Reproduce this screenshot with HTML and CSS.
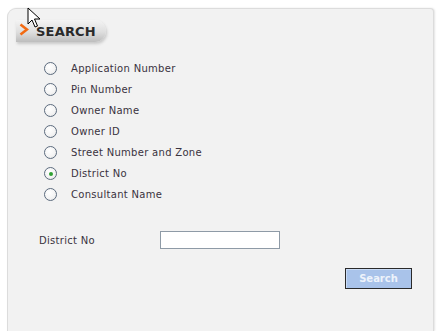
FILE: index.html
```html
<!DOCTYPE html>
<html lang="en">
<head>
    <meta charset="UTF-8">
    <title>Search</title>
    <link rel="stylesheet" href="styles.css">
</head>
<body>
    <div class="panel">
        <div class="tab">
            <svg class="chevron" width="10" height="13" viewBox="0 0 10 13">
                <path d="M1.5 1.5 L8 6.5 L1.5 11.5" fill="none" stroke="#f26a12" stroke-width="2.6" stroke-linejoin="miter"/>
            </svg>
            <span class="tab-title">SEARCH</span>
        </div>

        <div class="options">
            <label class="option"><span class="radio"></span>Application Number</label>
            <label class="option"><span class="radio"></span>Pin Number</label>
            <label class="option"><span class="radio"></span>Owner Name</label>
            <label class="option"><span class="radio"></span>Owner ID</label>
            <label class="option"><span class="radio"></span>Street Number and Zone</label>
            <label class="option"><span class="radio checked"></span>District No</label>
            <label class="option"><span class="radio"></span>Consultant Name</label>
        </div>

        <div class="field">
            <span class="field-label">District No</span>
            <input type="text" class="field-input">
        </div>

        <div class="actions">
            <button class="search-button">Search</button>
        </div>
    </div>

    <!-- mouse pointer -->
    <svg class="cursor" width="14" height="22" viewBox="0 0 14 22">
        <path d="M1 1 L1 17 L5 13 L8 20 L10.5 19 L7.5 12 L13 12 Z" fill="#fff" stroke="#000" stroke-width="1"/>
    </svg>
</body>
</html>
```

FILE: styles.css
```css
body {
    margin: 0;
    background-color: #fff;
    font-family: "DejaVu Sans", Verdana, sans-serif;
    position: relative;
    height: 331px;
    overflow: hidden;
}
.panel {
    margin: 8px 0 0 7px;
    width: 425px;
    height: 322px;
    background-color: #f2f2f2;
    border: 1px solid #dcdcdc;
    border-bottom: none;
    border-radius: 9px 4px 0 0;
    box-shadow: 1px 0 2px #e4e4e4;
}
.tab {
    margin: 11px 0 0 8px;
    width: 90px;
    height: 22px;
    display: flex;
    align-items: center;
    background: linear-gradient(to bottom, #f4f4f4 0%, #dedede 55%, #bdbdbd 100%);
    border-radius: 0 11px 11px 0;
    box-shadow: 1px 2px 3px #c8c8c8;
}
.chevron {
    margin: -4px 7px 0 3px;
}
.tab-title {
    font-size: 13px;
    font-weight: bold;
    color: #2a2a2a;
    letter-spacing: 0.2px;
}
.options {
    margin: 16px 0 0 36px;
    display: flex;
    flex-direction: column;
}
.option {
    height: 21px;
    display: flex;
    align-items: center;
    font-size: 10px;
    color: #3a3340;
    letter-spacing: 0.3px;
}
.radio {
    width: 11px;
    height: 11px;
    border: 1.5px solid #5c6b7e;
    border-radius: 50%;
    background: radial-gradient(circle at 40% 35%, #fff 0%, #f3f3f3 60%, #dcdcdc 100%);
    margin-right: 14px;
    display: flex;
    align-items: center;
    justify-content: center;
}
.radio.checked::after {
    content: "";
    width: 4px;
    height: 4px;
    border-radius: 50%;
    background-color: #2fa032;
}
.field {
    margin: 26px 0 0 31px;
    display: flex;
    align-items: center;
}
.field-label {
    width: 121px;
    font-size: 10px;
    color: #3a3340;
    letter-spacing: 0.3px;
}
.field-input {
    width: 116px;
    height: 14px;
    padding: 1px;
    border: 1px solid #8e9aa6;
    background-color: #fff;
    outline: none;
}
.actions {
    margin: 19px 21px 0 0;
    display: flex;
    justify-content: flex-end;
}
.search-button {
    width: 67px;
    height: 21px;
    background-color: #a9c3ea;
    border: 1px solid #2a2a2a;
    box-shadow: inset 1px 1px 0 #c9dbf5;
    color: #eef3fb;
    font-family: "DejaVu Sans", Verdana, sans-serif;
    font-size: 10px;
    font-weight: bold;
    padding: 0;
}
.cursor {
    position: absolute;
    left: 27px;
    top: 7px;
}
```
